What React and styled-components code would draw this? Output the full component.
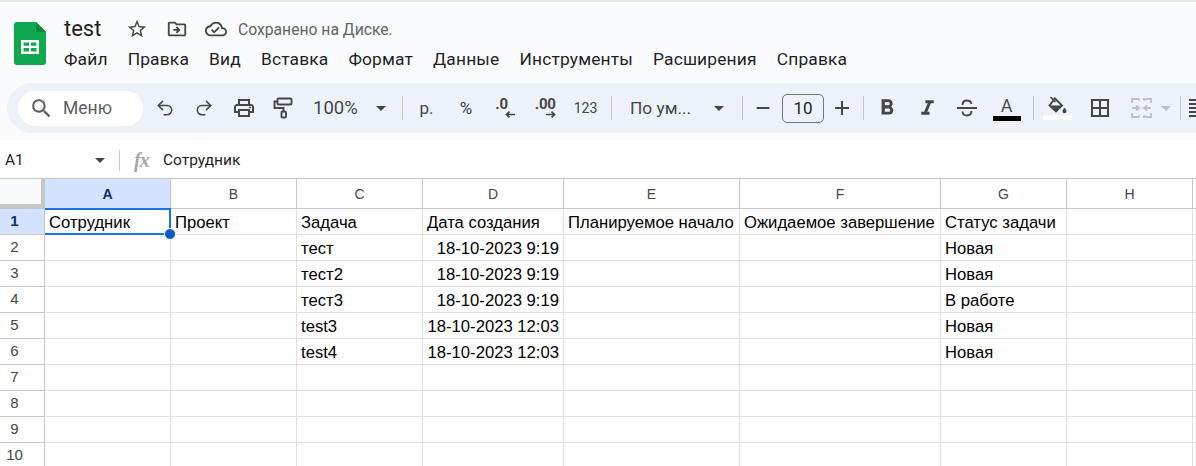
import React from 'react'
import styled, { createGlobalStyle } from 'styled-components'
import { Undo2, Redo2 } from 'lucide-react'
import {
	MdSearch, MdStarBorder, MdOutlineDriveFileMove, MdOutlineCloudDone, MdOutlinePrint,
	MdFormatBold, MdFormatItalic, MdBorderAll, MdAdd, MdRemove, MdFormatAlignLeft,
} from 'react-icons/md'

const GlobalStyle = createGlobalStyle`
	html, body {
		margin: 0;
		height: 466px;
		overflow: hidden;
		background: #f9fbfd;
		font-family: Roboto, "Noto Sans", sans-serif;
	}
`

const ICON = '#444746'
const columns = [
	{ name: 'A', width: 126 },
	{ name: 'B', width: 126 },
	{ name: 'C', width: 126 },
	{ name: 'D', width: 141 },
	{ name: 'E', width: 176 },
	{ name: 'F', width: 201 },
	{ name: 'G', width: 126 },
	{ name: 'H', width: 126 },
	{ name: '', width: 4 },
]
const rows = [
	['Сотрудник', 'Проект', 'Задача', 'Дата создания', 'Планируемое начало', 'Ожидаемое завершение', 'Статус задачи'],
	['', '', 'тест', '18-10-2023 9:19', '', '', 'Новая'],
	['', '', 'тест2', '18-10-2023 9:19', '', '', 'Новая'],
	['', '', 'тест3', '18-10-2023 9:19', '', '', 'В работе'],
	['', '', 'test3', '18-10-2023 12:03', '', '', 'Новая'],
	['', '', 'test4', '18-10-2023 12:03', '', '', 'Новая'],
	[], [], [], [],
]
const menu = ['Файл', 'Правка', 'Вид', 'Вставка', 'Формат', 'Данные', 'Инструменты', 'Расширения', 'Справка']

const Page = styled.div`
	width: 1196px;
	height: 466px;
	overflow: hidden;
	display: flex;
	flex-direction: column;
	border-top: 2px solid #e3e5e7;
	box-sizing: border-box;
`
const Header = styled.div`
	height: 81px;
	flex: none;
	display: flex;
	padding: 20px 0 0 14px;
	box-sizing: border-box;
`
const Logo = styled.svg`
	width: 32px;
	height: 43px;
	flex: none;
`
const HeadText = styled.div`
	margin-left: 18px;
	display: flex;
	flex-direction: column;
`
const TitleRow = styled.div`
	display: flex;
	align-items: center;
	height: 30px;
	margin-top: -9px;
	color: ${ICON};
`
const Title = styled.span`
	font-size: 22px;
	color: #1f1f1f;
	width: 62px;
`
const TitleIcon = styled.span`
	display: flex;
	justify-content: center;
	width: 22px;
	margin: 2px ${p => p.$gap}px 0 0;
`
const Saved = styled.span`
	font-size: 15.700px;
	color: #5f6368;
	margin: 2px 0 0 11px;
`
const Menu = styled.div`
	display: flex;
	gap: 20px;
	margin-top: 1px;
	font-size: 17.400px;
	line-height: 30px;
	letter-spacing: 0.16px;
	color: #1f1f1f;
`
const Toolbar = styled.div`
	height: 50px;
	margin-left: 7px;
	flex: none;
	display: flex;
	align-items: center;
	padding-left: 11px;
	background: #edf2fa;
	border-radius: 25px 0 0 25px;
	color: ${ICON};
	overflow: hidden;
`
const SearchPill = styled.div`
	width: 125px;
	height: 35px;
	flex: none;
	margin-right: 2px;
	padding-left: 11px;
	box-sizing: border-box;
	display: flex;
	align-items: center;
	gap: 9px;
	background: #fff;
	border-radius: 18px;
	font-size: 17.500px;
	color: #5b5e60;
`
const Tool = styled.div`
	width: ${p => p.$w || 39.5}px;
	height: 36px;
	flex: none;
	display: flex;
	align-items: center;
	justify-content: center;
	position: relative;
	font-size: ${p => p.$size || 17}px;
`
const Caret = styled.span`
	width: 0;
	height: 0;
	flex: none;
	border-left: 5px solid transparent;
	border-right: 5px solid transparent;
	border-top: 5px solid ${p => p.$color || ICON};
`
const Divider = styled.span`
	width: 1px;
	height: 24px;
	flex: none;
	background: #c7c7c7;
	margin: 0 ${p => p.$right ?? 4}px 0 ${p => p.$left ?? 4}px;
`
const Dropdown = styled.div`
	width: ${p => p.$w}px;
	flex: none;
	display: flex;
	align-items: center;
	justify-content: space-between;
	padding: 0 ${p => p.$pr}px 0 ${p => p.$pl}px;
	box-sizing: border-box;
	font-size: ${p => p.$size}px;
`
const SizeBox = styled.div`
	width: 42px;
	height: 29px;
	flex: none;
	box-sizing: border-box;
	border: 1px solid #747775;
	border-radius: 5px;
	display: flex;
	align-items: center;
	justify-content: center;
	font-size: 17px;
	color: #1f1f1f;
`
const Decimal = styled.div`
	display: flex;
	flex-direction: column;
	align-items: ${p => p.$align};
	width: ${p => p.$w}px;
	font-size: 15px;
	font-weight: 700;
	line-height: 13px;
	margin-top: -1px;
	letter-spacing: -0.2px;
`
const ColorTool = styled.div`
	display: flex;
	flex-direction: column;
	align-items: center;
	width: ${p => p.$w}px;
`
const ColorBar = styled.span`
	display: block;
	width: 100%;
	height: 5px;
	background: ${p => p.$color};
`
const LetterA = styled.span`
	font-size: 18px;
	line-height: 20px;
	color: ${ICON};
`
const Formula = styled.div`
	height: 38px;
	flex: none;
	margin-top: 7px;
	padding: 2px 0 0 5px;
	display: flex;
	align-items: center;
	background: #fff;
	box-sizing: border-box;
	font-size: 15.500px;
	color: #1f1f1f;
`
const NameBox = styled.div`
	width: 100px;
	flex: none;
	display: flex;
	align-items: center;
	justify-content: space-between;
`
const FormulaDivider = styled.span`
	width: 1px;
	height: 21px;
	flex: none;
	background: #c7c7c7;
	margin: 0 14px 0 14px;
`
const Fx = styled.span`
	font-family: "Liberation Serif", serif;
	font-style: italic;
	font-weight: 700;
	font-size: 20px;
	color: #a6a8aa;
	width: 29px;
	letter-spacing: -1px;
`
const Sheet = styled.div`
	display: grid;
	grid-template-columns: 45px ${columns.map(c => c.width + 'px').join(' ')};
	grid-template-rows: 30px;
	grid-auto-rows: 26px;
	border-top: 1px solid #c7c7c7;
	flex: none;
	background: #fff;
`
const Corner = styled.div`
	box-sizing: border-box;
	background: #f8f9fa;
	border-right: 4px solid #c4c7c5;
	border-bottom: 5px solid #c4c7c5;
`
const ColHead = styled.div`
	box-sizing: border-box;
	display: flex;
	align-items: center;
	justify-content: center;
	font-family: "Liberation Sans", Arial, sans-serif;
	font-size: 14px;
	font-weight: ${p => p.$active ? 700 : 400};
	color: ${p => p.$active ? '#0b2f63' : '#444746'};
	background: ${p => p.$active ? '#d3e3fd' : '#fff'};
	border-right: 1px solid #c7c7c7;
	border-bottom: 1px solid #c7c7c7;
`
const RowHead = styled.div`
	box-sizing: border-box;
	padding: 0 15px 2px 0;
	display: flex;
	align-items: center;
	justify-content: center;
	font-family: "Liberation Sans", Arial, sans-serif;
	font-size: 15px;
	font-weight: ${p => p.$active ? 700 : 400};
	color: ${p => p.$active ? '#0b2f63' : '#444746'};
	background: ${p => p.$active ? '#d3e3fd' : '#fff'};
	border-right: 1px solid #c7c7c7;
	border-bottom: 1px solid #c7c7c7;
`
const Cell = styled.div`
	position: relative;
	box-sizing: border-box;
	padding: 0 4px 0 4px;
	display: flex;
	align-items: flex-end;
	justify-content: ${p => p.$right ? 'flex-end' : 'flex-start'};
	font-family: "Liberation Sans", Arial, sans-serif;
	font-size: 16.670px;
	line-height: 23px;
	white-space: nowrap;
	color: #000;
	border-right: 1px solid #e1e1e1;
	border-bottom: 1px solid #e1e1e1;
`
const Selection = styled.div`
	position: absolute;
	inset: -1px -1px -1px 0;
	border: 2px solid #1a73e8;
	border-left: none;
	pointer-events: none;
`
const Handle = styled.div`
	position: absolute;
	right: -7px;
	bottom: -7px;
	width: 10px;
	height: 10px;
	border-radius: 50%;
	background: #0b57d0;
	border: 1px solid #fff;
	z-index: 2;
`

const SheetsLogo = () => (
	<Logo viewBox="0 0 32 43">
		<path d="M3 0h19l10 10v30a3 3 0 0 1-3 3H3a3 3 0 0 1-3-3V3a3 3 0 0 1 3-3z" fill="#0da84f" />
		<path d="M22 0l10 10H22z" fill="#0a8a3f" />
		<path d="M7 18h18v14H7z" fill="#fff" />
		<path d="M9.500 20.500h5.500v3.200H9.500zM17 20.500h5.500v3.200H17zM9.500 26h5.500v3.500H9.500zM17 26h5.500v3.500H17z" fill="#0da84f" />
	</Logo>
)

const Arrow = ({ left }) => (
	<svg width="10" height="7" viewBox="0 0 10 7" fill="none" stroke={ICON} strokeWidth="1.700" style={{ marginLeft: left ? 10 : 0 }}>
		{left ? <path d="M10 3.500H1.500M4.500 .7L1.500 3.500 4.500 6.300" /> : <path d="M0 3.500H8.500M5.500 .7L8.500 3.500 5.500 6.300" />}
	</svg>
)

const PaintIcon = () => (
	<svg width="20" height="22" viewBox="0 0 20 22" fill="none" stroke={ICON} strokeWidth="1.900">
		<rect x="4.500" y="1.500" width="14" height="6" rx="1" />
		<path d="M4.500 4.500H1.500V11H10.500V14.500" />
		<rect x="8.500" y="14.500" width="4.500" height="6" rx="1" />
	</svg>
)

const StrikeIcon = () => (
	<svg width="22" height="20" viewBox="0 0 22 20" fill="none" stroke={ICON} strokeWidth="1.900">
		<path d="M1 10H21" />
		<path d="M6.500 7C6.500 3.500 8.500 2.500 11 2.500S15 3.500 15.500 6" />
		<path d="M15.500 13C15.500 16 13.500 17.500 11 17.500S6.800 16 6.500 13.500" />
	</svg>
)

const FillIcon = () => (
	<svg width="22" height="18" viewBox="0 0 22 18" fill={ICON} stroke={ICON}>
		<path d="M9 1.500L16 8.500 10 14.500 3.500 8.500z" fill="none" strokeWidth="1.900" />
		<path d="M4 8.500H15.500L10 14z" stroke="none" />
		<path d="M4.500 0L9.500 5" fill="none" strokeWidth="1.700" />
		<path d="M18.500 10.500c1.300 1.800 2 2.700 2 3.700a2 2 0 0 1-4 0c0-1 .7-1.900 2-3.700z" stroke="none" />
	</svg>
)

const MergeIcon = () => (
	<svg width="21" height="20" viewBox="0 0 21 20" fill="none" stroke="#bdc1c6" strokeWidth="1.800">
		<path d="M1 5V1h7v2M1 15v4h7v-2M20 5V1h-7v2M20 15v4h-7v-2M1 10h6M5 7.500L8 10l-3 2.500M20 10h-6M16 7.500L13 10l3 2.500" />
	</svg>
)

const App = () => (
	<Page>
		<GlobalStyle />
		<Header>
			<SheetsLogo />
			<HeadText>
				<TitleRow>
					<Title>test</Title>
					<TitleIcon $gap={18}><MdStarBorder size={24} /></TitleIcon>
					<TitleIcon $gap={17}><MdOutlineDriveFileMove size={24} /></TitleIcon>
					<TitleIcon $gap={0}><MdOutlineCloudDone size={24} /></TitleIcon>
					<Saved>Сохранено на Диске.</Saved>
				</TitleRow>
				<Menu>
					{menu.map(m => <span key={m}>{m}</span>)}
				</Menu>
			</HeadText>
		</Header>
		<Toolbar>
			<SearchPill><MdSearch size={25} />Меню</SearchPill>
			<Tool><Undo2 size={20} strokeWidth={1.900} /></Tool>
			<Tool><Redo2 size={20} strokeWidth={1.900} /></Tool>
			<Tool><MdOutlinePrint size={24} /></Tool>
			<Tool><PaintIcon /></Tool>
			<Dropdown $w={95} $pl={10} $pr={12} $size={18.500}>100%<Caret /></Dropdown>
			<Divider $left={4} $right={4} />
			<Tool $w={39}>р.</Tool>
			<Tool $w={40}>%</Tool>
			<Tool><Decimal $align="flex-start" $w={21}>.0<Arrow left /></Decimal></Tool>
			<Tool><Decimal $align="flex-end" $w={21}>.00<Arrow /></Decimal></Tool>
			<Tool $w={41} $size={14}>123</Tool>
			<Divider $left={5} $right={4} />
			<Dropdown $w={126} $pl={14} $pr={18} $size={17.300}>По ум...<Caret /></Dropdown>
			<Divider $left={0} $right={1} />
			<Tool $w={38}><MdRemove size={22} /></Tool>
			<SizeBox>10</SizeBox>
			<Tool $w={36}><MdAdd size={24} /></Tool>
			<Divider $left={3} $right={3} />
			<Tool $w={40}><MdFormatBold size={26} /></Tool>
			<Tool $w={40}><MdFormatItalic size={25} /></Tool>
			<Tool $w={39}><StrikeIcon /></Tool>
			<Tool $w={41}><ColorTool $w={28}><LetterA>A</LetterA><ColorBar $color="#000" /></ColorTool></Tool>
			<Divider $left={6} $right={3} />
			<Tool $w={40}><ColorTool $w={29}><FillIcon /><ColorBar $color="#fff" /></ColorTool></Tool>
			<Tool $w={45}><MdBorderAll size={24} /></Tool>
			<Tool $w={38}><MergeIcon /></Tool>
			<Tool $w={12}><Caret $color="#bdc1c6" /></Tool>
			<Divider $left={8} $right={5} />
			<Tool $w={24}><MdFormatAlignLeft size={24} /></Tool>
		</Toolbar>
		<Formula>
			<NameBox>A1<Caret /></NameBox>
			<FormulaDivider />
			<Fx>fx</Fx>
			<span>Сотрудник</span>
		</Formula>
		<Sheet>
			<Corner />
			{columns.map(c => <ColHead key={c.name} $active={c.name === 'A'}>{c.name}</ColHead>)}
			{rows.map((row, r) => (
				<React.Fragment key={r}>
					<RowHead $active={r === 0}>{r + 1}</RowHead>
					{columns.map((c, i) => (
						<Cell key={c.name} $right={i === 3 && r > 0}>
							{row[i]}
							{r === 0 && i === 0 && <Selection><Handle /></Selection>}
						</Cell>
					))}
				</React.Fragment>
			))}
		</Sheet>
	</Page>
)

export default App
